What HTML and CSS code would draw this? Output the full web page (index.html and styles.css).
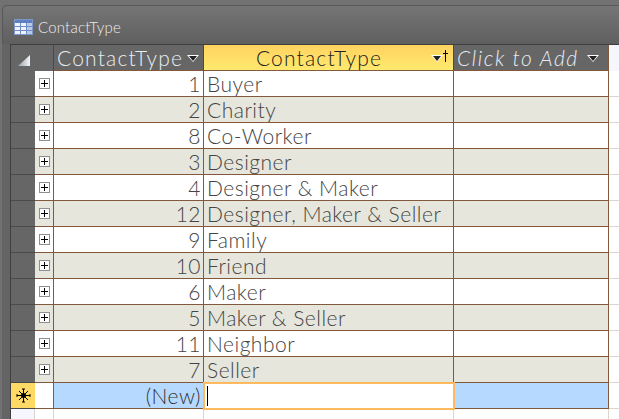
FILE: index.html
```html
<!DOCTYPE html>
<html lang="en">

<head>
    <meta charset="UTF-8">
    <title>ContactType</title>
    <link rel="stylesheet" href="styles.css">
</head>

<body>
    <div class="window">
        <div class="tab">
            <svg class="tab-icon" width="19" height="16" viewBox="0 0 19 16">
                <rect x="0.5" y="0.5" width="18" height="15" fill="#eef2fa" stroke="#7d97c8" />
                <rect x="1" y="1" width="17" height="3" fill="#5f7fc0" />
                <rect x="13" y="4" width="5" height="11" fill="#b9c9e8" />
                <path d="M6.5 4v11M12.5 4v11M1 7.5h17M1 11.5h17" stroke="#6f8cc4" />
            </svg>
            <span class="tab-title">ContactType</span>
        </div>
        <div class="grid">
            <div class="corner">
                <svg width="12" height="12" viewBox="0 0 12 12">
                    <defs>
                        <linearGradient id="cornerFill" x1="0" y1="0" x2="1" y2="0">
                            <stop offset="0" stop-color="#9aa0a8" />
                            <stop offset="1" stop-color="#f2f5fa" />
                        </linearGradient>
                    </defs>
                    <polygon points="12,0 12,11 0,11" fill="url(#cornerFill)" />
                </svg>
            </div>
            <div class="corner-end"></div>
            <div class="head"><span class="head-text">ContactType</span><span class="arrow"></span></div>
            <div class="head head-active">
                <span class="head-text head-center">ContactType</span>
                <span class="arrow arrow-active"></span>
                <svg class="sort-pin" width="5" height="12" viewBox="0 0 5 12">
                    <path d="M2.5 0v12M0 3.5h5" stroke="#000" />
                </svg>
            </div>
            <div class="head head-add"><span class="head-text head-italic">Click to Add</span><span class="arrow"></span></div>
            <div class="rest-head"></div>

            <div class="sel"></div><div class="exp"><span class="plus"></span></div><div class="num">1</div><div class="txt">Buyer</div><div class="cell"></div><div class="rest"></div>
            <div class="sel"></div><div class="exp alt"><span class="plus"></span></div><div class="num alt">2</div><div class="txt alt">Charity</div><div class="cell alt"></div><div class="rest"></div>
            <div class="sel"></div><div class="exp"><span class="plus"></span></div><div class="num">8</div><div class="txt">Co-Worker</div><div class="cell"></div><div class="rest"></div>
            <div class="sel"></div><div class="exp alt"><span class="plus"></span></div><div class="num alt">3</div><div class="txt alt">Designer</div><div class="cell alt"></div><div class="rest"></div>
            <div class="sel"></div><div class="exp"><span class="plus"></span></div><div class="num">4</div><div class="txt">Designer &amp; Maker</div><div class="cell"></div><div class="rest"></div>
            <div class="sel"></div><div class="exp alt"><span class="plus"></span></div><div class="num alt">12</div><div class="txt alt">Designer, Maker &amp; Seller</div><div class="cell alt"></div><div class="rest"></div>
            <div class="sel"></div><div class="exp"><span class="plus"></span></div><div class="num">9</div><div class="txt">Family</div><div class="cell"></div><div class="rest"></div>
            <div class="sel"></div><div class="exp alt"><span class="plus"></span></div><div class="num alt">10</div><div class="txt alt">Friend</div><div class="cell alt"></div><div class="rest"></div>
            <div class="sel"></div><div class="exp"><span class="plus"></span></div><div class="num">6</div><div class="txt">Maker</div><div class="cell"></div><div class="rest"></div>
            <div class="sel"></div><div class="exp alt"><span class="plus"></span></div><div class="num alt">5</div><div class="txt alt">Maker &amp; Seller</div><div class="cell alt"></div><div class="rest"></div>
            <div class="sel"></div><div class="exp"><span class="plus"></span></div><div class="num">11</div><div class="txt">Neighbor</div><div class="cell"></div><div class="rest"></div>
            <div class="sel"></div><div class="exp alt"><span class="plus"></span></div><div class="num alt">7</div><div class="txt alt">Seller</div><div class="cell alt"></div><div class="rest"></div>

            <div class="sel sel-new">
                <svg width="15" height="15" viewBox="0 0 15 15">
                    <path d="M7.5 1v13M1 7.5h13M3 3l9 9M12 3l-9 9" stroke="#000" />
                    <circle cx="7.5" cy="7.5" r="2.5" fill="#000" />
                    <path d="M6 1h3M6 14h3M1 6v3M14 6v3" stroke="#000" />
                </svg>
            </div>
            <div class="exp"></div>
            <div class="num new">(New)</div>
            <div class="txt txt-focus"><span class="caret"></span></div>
            <div class="cell new"></div>
            <div class="rest"></div>

            <div class="fill fill-sel"></div><div class="fill"></div><div class="fill"></div><div class="fill"></div><div class="fill"></div><div class="fill fill-end"></div>
        </div>
    </div>
</body>

</html>
```
FILE: styles.css
```css
html,
body {
    margin: 0;
    padding: 0;
    height: 100%;
    overflow: hidden;
}

body {
    font-family: Lato, sans-serif;
    background-color: #727272;
}

.window {
    height: 419px;
    padding: 5px 0 0 2px;
    box-sizing: border-box;
}

.tab {
    height: 39px;
    box-sizing: border-box;
    padding: 13px 0 0 11px;
    display: flex;
    gap: 5px;
    border-top: 1px solid #585858;
    border-left: 1px solid #585858;
    border-top-left-radius: 5px;
    background: linear-gradient(#757575, #5f5f5f);
}

.tab-icon {
    display: block;
}

.tab-title {
    font-size: 15px;
    font-weight: 300;
    letter-spacing: 0.2px;
    line-height: 17px;
    color: #ececec;
}

.grid {
    display: grid;
    grid-template-columns: 24px 19px 150px 250px 155px 1fr;
    grid-template-rows: repeat(14, 26px) 1fr;
    height: 375px;
    box-sizing: border-box;
    margin-left: 8px;
    border-top: 1px solid #3f3f3f;
    border-left: 1px solid #3f3f3f;
    background-color: #fff;
    font-size: 21px;
    font-weight: 300;
    line-height: 25px;
    letter-spacing: 0.5px;
    color: #444;
    box-shadow: -8px 0 0 #646464;
}

.corner {
    background-color: #666;
    display: flex;
    justify-content: center;
    padding-top: 10px;
    box-sizing: border-box;
    padding-left: 2px;
}

.corner-end {
    background-color: #666;
    border-right: 1px solid #4a4a4a;
    box-sizing: border-box;
}

.head {
    display: flex;
    align-items: center;
    padding: 0 0 1px 3px;
    box-sizing: border-box;
    white-space: nowrap;
    background-color: #666;
    border-right: 1px solid #4a4a4a;
    border-bottom: 1px solid #83593e;
    color: #e8edf3;
    letter-spacing: 1.2px;
}

.head-text {
    flex: 1;
    overflow: hidden;
}

.head-center {
    text-align: center;
}

.head-italic {
    font-style: italic;
    letter-spacing: 1.6px;
}

.head-active {
    background: linear-gradient(#ffd35f, #ffe96f);
    color: #222;
    padding-right: 5px;
}

.head-add {
    border-right-color: #83593e;
    padding-right: 5px;
}

.arrow {
    width: 0;
    height: 0;
    margin: 2px 4px 0 0;
    border-left: 6px solid transparent;
    border-right: 6px solid transparent;
    border-top: 7px solid #fff;
    position: relative;
}

/* dark middle of the dropdown triangle */
.arrow::after {
    content: "";
    position: absolute;
    left: -4px;
    top: -6px;
    border-left: 4px solid transparent;
    border-right: 4px solid transparent;
    border-top: 5px solid #222;
}

.arrow-active {
    margin-right: 0;
}

.sort-pin {
    display: block;
    margin-bottom: 3px;
}

.rest-head {
    background-color: #f6f6ff;
}

.sel {
    background-color: #666;
    border-bottom: 1px solid #4a4a4a;
    box-sizing: border-box;
}

.sel-new {
    background-color: #ffd966;
    display: flex;
    align-items: center;
    justify-content: center;
}

.exp,
.num,
.txt,
.cell {
    box-sizing: border-box;
    border-right: 1px solid #83593e;
    border-bottom: 1px solid #83593e;
    background-color: #fff;
    white-space: nowrap;
}

.exp {
    display: flex;
    align-items: center;
    padding-left: 4px;
}

.num {
    text-align: right;
    padding-right: 2px;
}

.txt {
    padding-left: 3px;
}

.alt {
    background-color: #e6e6dc;
}

.new {
    background-color: #b6d9ff;
    color: #333;
}

.txt-focus {
    position: relative;
    outline: 2px solid #ffb95e;
    outline-offset: -1px;
    display: flex;
    align-items: center;
}

.caret {
    width: 1px;
    height: 20px;
    background-color: #000;
}

.plus {
    width: 11px;
    height: 11px;
    box-sizing: border-box;
    border: 1px solid #8f8f8f;
    background:
        linear-gradient(#000, #000) center / 7px 1px no-repeat,
        linear-gradient(#000, #000) center / 1px 7px no-repeat,
        #fff;
}

.rest {
    border-bottom: 1px solid #ddd6d0;
    box-sizing: border-box;
}

.fill {
    border-right: 1px solid #ddd6d0;
    box-sizing: border-box;
}

.fill-sel {
    background-color: #f6f6ff;
}

.fill-end {
    border-right: none;
}
```
